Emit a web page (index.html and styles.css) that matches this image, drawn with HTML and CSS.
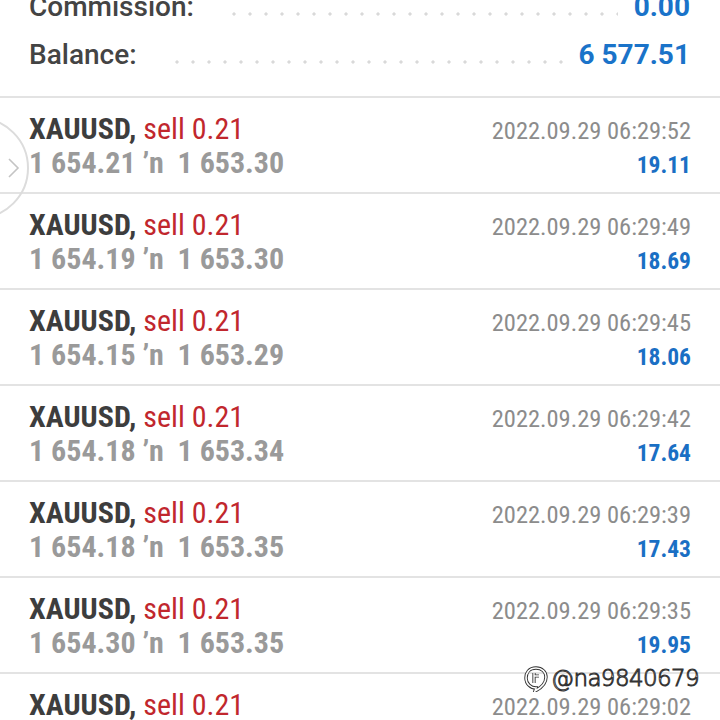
FILE: index.html
```html
<!DOCTYPE html>
<html>
<head>
<meta charset="utf-8">
<link rel="stylesheet" href="styles.css">
</head>
<body>
<div class="screen">
  <div class="summary">
    <div class="sum-row"><span class="label">Commission:</span><span class="dots"></span><span class="value">0.00</span></div>
    <div class="sum-row"><span class="label">Balance:</span><span class="dots"></span><span class="value">6 577.51</span></div>
  </div>
  <div class="list">
    <div class="row">
      <div class="line"><span class="sym">XAUUSD, <span class="sell">sell 0.21</span></span><span class="time">2022.09.29 06:29:52</span></div>
      <div class="line"><span class="price">1 654.21 ’n&nbsp; 1 653.30</span><span class="profit">19.11</span></div>
    </div>
    <div class="row">
      <div class="line"><span class="sym">XAUUSD, <span class="sell">sell 0.21</span></span><span class="time">2022.09.29 06:29:49</span></div>
      <div class="line"><span class="price">1 654.19 ’n&nbsp; 1 653.30</span><span class="profit">18.69</span></div>
    </div>
    <div class="row">
      <div class="line"><span class="sym">XAUUSD, <span class="sell">sell 0.21</span></span><span class="time">2022.09.29 06:29:45</span></div>
      <div class="line"><span class="price">1 654.15 ’n&nbsp; 1 653.29</span><span class="profit">18.06</span></div>
    </div>
    <div class="row">
      <div class="line"><span class="sym">XAUUSD, <span class="sell">sell 0.21</span></span><span class="time">2022.09.29 06:29:42</span></div>
      <div class="line"><span class="price">1 654.18 ’n&nbsp; 1 653.34</span><span class="profit">17.64</span></div>
    </div>
    <div class="row">
      <div class="line"><span class="sym">XAUUSD, <span class="sell">sell 0.21</span></span><span class="time">2022.09.29 06:29:39</span></div>
      <div class="line"><span class="price">1 654.18 ’n&nbsp; 1 653.35</span><span class="profit">17.43</span></div>
    </div>
    <div class="row">
      <div class="line"><span class="sym">XAUUSD, <span class="sell">sell 0.21</span></span><span class="time">2022.09.29 06:29:35</span></div>
      <div class="line"><span class="price">1 654.30 ’n&nbsp; 1 653.35</span><span class="profit">19.95</span></div>
    </div>
    <div class="row">
      <div class="line"><span class="sym">XAUUSD, <span class="sell">sell 0.21</span></span><span class="time">2022.09.29 06:29:02</span></div>
      <div class="line"><span class="price">1 654.20 ’n&nbsp; 1 653.30</span><span class="profit">18.48</span></div>
    </div>
  </div>
  <div class="handle">
    <svg width="60" height="110" viewBox="0 0 60 110">
      <circle cx="-22" cy="55" r="50" fill="none" stroke="#dcdcdc" stroke-width="2"/>
      <path d="M9 46 L18 55 L9 64" fill="none" stroke="#c4c4c4" stroke-width="1.6"/>
    </svg>
  </div>
  <div class="watermark">
    <svg class="wm-logo" width="26" height="28" viewBox="0 0 26 28">
      <path d="M13 4 C6 4 3 9 3 14 C3 20 8 24 13 24 L12 27 C18 24 23 20 23 13 C23 8 19 4 13 4 Z" fill="none" stroke="#333" stroke-width="3.4"/>
      <path d="M13 4 C6 4 3 9 3 14 C3 20 8 24 13 24 L12 27 C18 24 23 20 23 13 C23 8 19 4 13 4 Z" fill="none" stroke="#fff" stroke-width="1.6"/>
      <path d="M11 9 L11 19 M11 12 L16 12" fill="none" stroke="#333" stroke-width="3.2"/>
      <path d="M11 9 L11 19 M11 12 L16 12" fill="none" stroke="#fff" stroke-width="1.4"/>
    </svg>
    <span class="wm-text">@na9840679</span>
  </div>
</div>
</body>
</html>
```

FILE: styles.css
```css
html, body {
  margin: 0;
  padding: 0;
  background: #ffffff;
}
.screen {
  position: relative;
  width: 720px;
  height: 720px;
  overflow: hidden;
  font-family: Roboto, "Liberation Sans", sans-serif;
}
.summary {
  margin-top: -17px;
  padding: 0 30px 17px 29px;
}
.sum-row {
  display: flex;
  align-items: baseline;
  height: 48px;
  line-height: 48px;
  font-size: 28px;
  font-weight: 500;
}
.label {
  color: #444444;
}
.dots {
  flex: 1;
  height: 4px;
  margin: 0 16px 0 32px;
  background-image: radial-gradient(circle, #d9d9d9 1.4px, transparent 1.8px);
  background-size: 16px 4px;
  background-repeat: repeat-x;
}
.value {
  color: #1a73c9;
  font-weight: 700;
}
.list {
  border-top: 2px solid #e3e3e3;
}
.row {
  padding: 14px 29px 12px 29px;
  border-bottom: 2px solid #e3e3e3;
}
.line {
  display: flex;
  justify-content: space-between;
  align-items: baseline;
  height: 34px;
  line-height: 34px;
  font-size: 30px;
  font-family: "Roboto Condensed", Roboto, sans-serif;
  font-stretch: 80%;
}
.sym {
  color: #3d3d3d;
  font-weight: 700;
}
.sell {
  color: #c1272d;
  font-weight: 400;
}
.time {
  color: #8c8c8c;
  font-size: 24.5px;
  font-weight: 400;
}
.price {
  color: #9a9a9a;
  font-weight: 700;
}
.profit {
  color: #1a6fc4;
  font-size: 23.5px;
  font-weight: 700;
}
.handle {
  position: absolute;
  left: 0;
  top: 113px;
}
.handle svg {
  display: block;
}
.watermark {
  position: absolute;
  left: 523px;
  top: 664px;
  display: flex;
  align-items: center;
  gap: 2px;
}
.wm-text {
  font-family: "DejaVu Sans", sans-serif;
  font-weight: 200;
  font-size: 23px;
  color: #ffffff;
  -webkit-text-stroke: 1px #333333;
  letter-spacing: -0.6px;
}
```
